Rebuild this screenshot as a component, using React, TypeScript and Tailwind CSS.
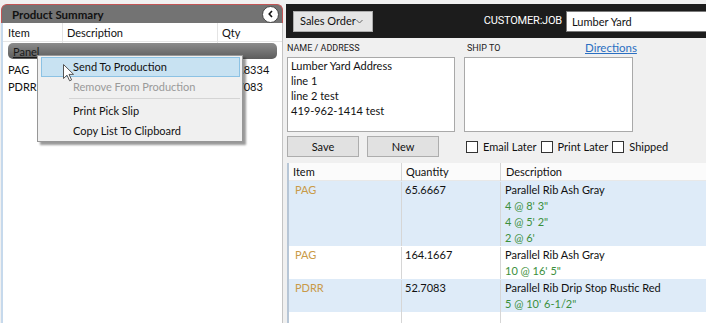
import React from "react";

const rows = [
  { item: "PAG", qty: "65.6667", desc: "Parallel Rib Ash Gray", cuts: ['4 @ 8\' 3"', '4 @ 5\' 2"', "2 @ 6'"], blue: true },
  { item: "PAG", qty: "164.1667", desc: "Parallel Rib Ash Gray", cuts: ['10 @ 16\' 5"'], blue: false },
  { item: "PDRR", qty: "52.7083", desc: "Parallel Rib Drip Stop Rustic Red", cuts: ['5 @ 10\' 6-1/2"'], blue: true },
];

function Check({ label }: { label: string }) {
  return (
    <div className="flex items-center whitespace-nowrap">
      <div className="w-[12px] h-[12px] bg-white border border-[#333]" />
      <span className="ml-[5px]">{label}</span>
    </div>
  );
}

export default function App() {
  return (
    <div className="w-[706px] h-[323px] bg-[#f0f0f0] flex overflow-hidden relative text-[11px] leading-[16px] text-[#111] font-['Lato',sans-serif] whitespace-nowrap">
      {/* Left panel */}
      <div className="w-[282px] ml-[1px] mt-[4px] flex flex-col">
        <div className="h-[19px] bg-[#737373] border border-b-0 border-[#c25454] rounded-t-[6px] flex items-center justify-between pl-[10px] pr-[3px]">
          <span className="font-bold text-[11.5px] text-[#111] pt-[1px]">Product Summary</span>
          <div className="w-[17px] h-[17px] rounded-full bg-white border border-[#444] flex items-center justify-center">
            <svg width="8" height="8" viewBox="0 0 8 8">
              <path d="M5 1 L2.2 4 L5 7" stroke="#111" strokeWidth="1.6" fill="none" />
            </svg>
          </div>
        </div>
        <div className="flex-1 bg-white border-l-2 border-l-[#c6d9ec] border-r border-r-[#c4c4c4] flex flex-col">
          <div className="h-[19px] grid grid-cols-[60px_155px_1fr] border-b border-[#e6e6e6]">
            <div className="pl-[5px] border-r border-[#e4e4e4] leading-[20px]">Item</div>
            <div className="pl-[4px] border-r border-[#e4e4e4] leading-[20px]">Description</div>
            <div className="pl-[4px] leading-[20px]">Qty</div>
          </div>
          <div className="mx-[5px] mt-[1px] h-[16px] rounded-[5px] bg-gradient-to-b from-[#8c8c8c] to-[#5c5c5c] px-[5px] leading-[17px] text-[#1a1a1a]">
            <span className="underline">Panel</span>
          </div>
          <div className="grid grid-cols-[60px_155px_1fr] h-[17px] mt-[2px] leading-[17px]">
            <div className="pl-[5px]">PAG</div>
            <div />
            <div className="pl-[4px]">229.8334</div>
          </div>
          <div className="grid grid-cols-[60px_155px_1fr] h-[17px] leading-[17px]">
            <div className="pl-[5px]">PDRR</div>
            <div />
            <div className="pl-[4px]">52.7083</div>
          </div>
        </div>
      </div>

      {/* Context menu */}
      <div className="absolute left-[37px] top-[55px] w-[206px] bg-[#f0f0f0] border border-[#979797] shadow-[3px_3px_2px_rgba(0,0,0,0.4)] pt-[1px] pl-[3px] pr-[2px]">
        <div className="h-[20px] bg-[#c8e2f2] border border-[#8cc2e4] flex items-center pl-[31px]">Send To Production</div>
        <div className="h-[20px] flex items-center pl-[32px] text-[#9a9a9a]">Remove From Production</div>
        <div className="h-[4px] pl-[28px] pt-[1px]">
          <div className="h-[1px] bg-[#d4d4d4]" />
        </div>
        <div className="h-[20px] flex items-center pl-[32px]">Print Pick Slip</div>
        <div className="h-[20px] flex items-center pl-[32px]">Copy List To Clipboard</div>
      </div>

      {/* Cursor */}
      <svg className="absolute left-[63px] top-[64px]" width="12" height="18" viewBox="0 0 12 18">
        <path d="M0.5 0.5 L0.5 14.5 L4 11.2 L6.6 16.8 L8.6 15.9 L6 10.4 L10.6 10.4 Z" fill="white" stroke="#555" strokeWidth="1" />
      </svg>

      {/* Right panel */}
      <div className="flex-1 ml-[3px] mt-[4px] flex flex-col">
        <div className="h-[34px] bg-[#1c1c1c] flex items-center pl-[7px]">
          <div className="w-[80px] h-[21px] bg-[#e5e5e5] border border-[#adadad] flex items-center pl-[6px] pr-[9px] justify-between">
            <span>Sales Order</span>
            <svg width="7" height="5" viewBox="0 0 7 5">
              <path d="M0.5 1 L3.5 4 L6.5 1" stroke="#666" strokeWidth="1" fill="none" />
            </svg>
          </div>
          <div className="flex-1" />
          <span className="text-white mr-[4px] font-['Roboto',sans-serif] text-[11px] tracking-[-0.2px]">CUSTOMER:JOB</span>
          <div className="w-[140px] h-[21px] bg-white border border-r-0 border-[#7a7a7a] pl-[5px] leading-[19px]">Lumber Yard</div>
        </div>

        <div className="pl-[1px] flex flex-col">
          <div className="flex h-[18px] items-end text-[#222]">
            <div className="w-[180px] pb-[1px] font-['Roboto',sans-serif] text-[9px] leading-[13px]">NAME / ADDRESS</div>
            <div className="w-[118px] pb-[1px] font-['Roboto',sans-serif] text-[9px] leading-[13px]">SHIP TO</div>
            <div className="text-[#2a6fc2] underline text-[11.5px] leading-[14px] pb-[1px]">Directions</div>
          </div>
          <div className="flex mt-[1px] h-[75px]">
            <div className="w-[168px] h-full bg-white border border-[#a9a9a9] pl-[3px] leading-[15px]">
              <div>Lumber Yard Address</div>
              <div>line 1</div>
              <div>line 2 test</div>
              <div>419-962-1414 test</div>
            </div>
            <div className="w-[169px] h-full ml-[9px] bg-white border border-[#a9a9a9]" />
          </div>
          <div className="flex items-center mt-[4px] h-[21px]">
            <div className="w-[72px] h-full bg-[#e1e1e1] border border-[#adadad] flex items-center justify-center">Save</div>
            <div className="w-[72px] h-full ml-[8px] bg-[#e1e1e1] border border-[#adadad] flex items-center justify-center">New</div>
            <div className="ml-[27px] flex items-center gap-[4px]">
              <Check label="Email Later" />
              <Check label="Print Later" />
              <Check label="Shipped" />
            </div>
          </div>
        </div>

        {/* Grid */}
        <div className="flex-1 mt-[6px] ml-[1px] border-l-2 border-[#b7c6d6] bg-white flex flex-col">
          <div className="h-[18px] grid grid-cols-[113px_99px_1fr] bg-[#fbfbfb] border-b border-[#e8e8e8] leading-[18px]">
            <div className="pl-[4px] border-r border-[#d6d6d6]">Item</div>
            <div className="pl-[4px] border-r border-[#d6d6d6]">Quantity</div>
            <div className="pl-[5px]">Description</div>
          </div>
          {rows.map((r, i) => (
            <div key={i} className={`grid grid-cols-[113px_99px_1fr] pt-[1px] ${r.blue ? "bg-[#deebf8]" : "bg-white"}`}>
              <div className="pl-[6px] border-r border-[#d6d6d6] text-[#c99a48]">{r.item}</div>
              <div className="pl-[3px] border-r border-[#d6d6d6]">{r.qty}</div>
              <div className="pl-[4px]">
                <div>{r.desc}</div>
                {r.cuts.map((c, j) => (
                  <div key={j} className="text-[#3b8f3b]">{c}</div>
                ))}
              </div>
            </div>
          ))}
          <div className="flex-1 grid grid-cols-[113px_99px_1fr]">
            <div className="border-r border-[#d6d6d6]" />
            <div className="border-r border-[#d6d6d6]" />
            <div />
          </div>
        </div>
      </div>
    </div>
  );
}
